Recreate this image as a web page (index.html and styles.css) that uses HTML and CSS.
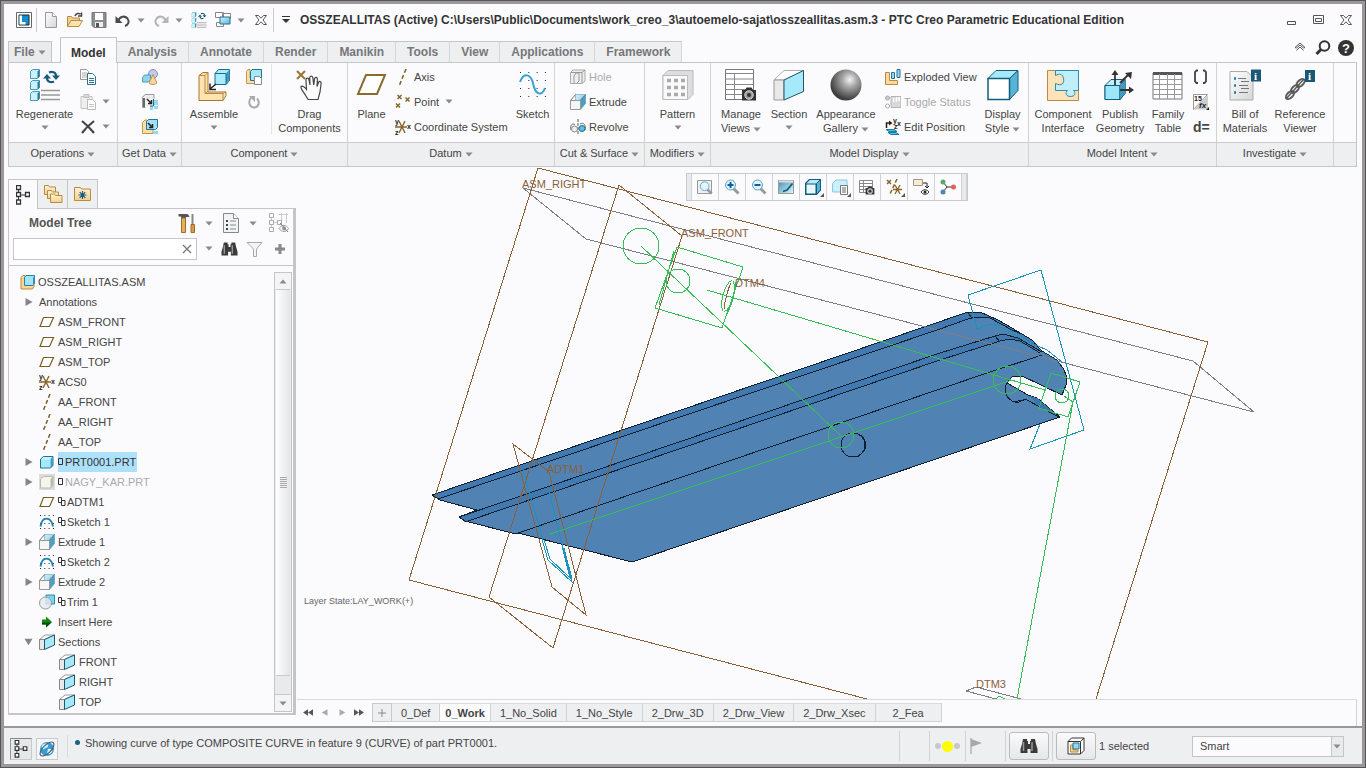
FILE: index.html
```html
<!DOCTYPE html>
<html lang="en">
<head>
<meta charset="utf-8">
<title>OSSZEALLITAS (Active) - PTC Creo Parametric Educational Edition</title>
<link rel="stylesheet" href="styles.css">
</head>
<body>
<svg class="paints" aria-hidden="true">
  <defs>
    <linearGradient id="gBlue" x1="0" y1="0" x2="1" y2="1"><stop offset="0" stop-color="#d3f3fd"/><stop offset="1" stop-color="#5cb6da"/></linearGradient>
    <linearGradient id="gGray" x1="0" y1="0" x2="1" y2="1"><stop offset="0" stop-color="#fff"/><stop offset="1" stop-color="#d4d6d8"/></linearGradient>
    <linearGradient id="gWood" x1="0" y1="0" x2="0" y2="1"><stop offset="0" stop-color="#fff3d4"/><stop offset="1" stop-color="#f3d08f"/></linearGradient>
    <linearGradient id="gView" x1="0" y1="0" x2="1" y2="1"><stop offset="0" stop-color="#3f92b4"/><stop offset="1" stop-color="#e2f7fe"/></linearGradient>
    <radialGradient id="gBall" cx=".62" cy=".33" r=".65"><stop offset="0" stop-color="#f4f4f4"/><stop offset=".35" stop-color="#aaa"/><stop offset="1" stop-color="#3c3c3c"/></radialGradient>
  </defs>
</svg>
<svg class="sprite" aria-hidden="true">
  <symbol id="caret" viewBox="0 0 8 5"><path d="M.5.5h7L4 4.5z" fill="#8a8a8a"/></symbol>
  <symbol id="app" viewBox="0 0 16 16"><path d="M.5.5h15v15H.5z" fill="#fff" stroke="#666"/><path d="M3 3h10v10H3z" fill="#0d8fd0" stroke="#222"/><path d="M3.500 9V12.500H9.500V10H6V3.500H3.500z" fill="#fff"/></symbol>
  <symbol id="new" viewBox="0 0 16 16"><path d="M2.500.5h7l4 4v11h-11z" fill="url(#gGray)" stroke="#999"/><path d="M9.500.5v4h4" fill="#fff" stroke="#999"/></symbol>
  <symbol id="open" viewBox="0 0 16 16"><path d="M.5 14V4.500h4l1 1.500h7V9" fill="#f0cf92" stroke="#b98d45"/><path d="M.5 14.500 4 8.500h11.500L12 14.500z" fill="#fde3ae" stroke="#b98d45"/><path d="M8 4C9 1 12 1 13.500 2M14.500.5V4H11" fill="none" stroke="#444" stroke-width="1.500"/></symbol>
  <symbol id="save" viewBox="0 0 16 16"><path d="M1 .5h14v15H3l-2-2z" fill="#8b8d8f" stroke="#777"/><path d="M4 1h8v7H4z" fill="#fff"/><path d="M4 10h8v5H4z" fill="#eee"/><path d="M5 11h3v4H5z" fill="#555"/></symbol>
  <symbol id="undo" viewBox="0 0 16 16"><path d="M3 9C5 4 10 3.500 12.500 6.500 15 10 13 13 10 14" fill="none" stroke="#4a4a4a" stroke-width="2"/><path d="M.5 4v7h7z" fill="#4a4a4a"/></symbol>
  <symbol id="redo" viewBox="0 0 16 16"><path d="M13 9C11 4 6 3.500 3.500 6.500 1 10 3 13 6 14" fill="none" stroke="#b5b5b5" stroke-width="2"/><path d="M15.500 4v7h-7z" fill="#b5b5b5"/></symbol>
  <symbol id="minicube" viewBox="0 0 10 10"><path d="M.5 2.500 2.500.5h7v7l-2 2h-7z" fill="#bfeffc" stroke="#4d9ab8"/><path d="M7.500 2.500 9.500.5v7l-2 2z" fill="#2a7d9e"/><path d="M1 3h6v6H1z" fill="#c9f2fd"/></symbol>
  <symbol id="sync" viewBox="0 0 17 14"><path d="M6 2.500c3-1.500 7-.5 7 3.500M11 11.500c-3 1.500-7 .5-7-3.500" fill="none" stroke="#155c7c" stroke-width="2.200"/><path d="M9 5.500h8l-4 4.500zM0 8.500h8L4 4z" fill="#155c7c"/></symbol>
  <symbol id="regen" viewBox="0 0 32 32"><use href="#minicube" x="1" y="0" width="10" height="10"/><use href="#minicube" x="1" y="11" width="10" height="10"/><use href="#minicube" x="1" y="22" width="10" height="10"/><use href="#sync" x="14" y="1" width="17" height="14"/><path d="M12 21.500h19M12 26h19M12 30.500h19" stroke="#999" stroke-width="1.600"/></symbol>
  <symbol id="windows" viewBox="0 0 16 16"><path d="M.5.5h8v5h-8zM7.500 1.500h8v5h-8zM1.500 10.500h7v4h-7z" fill="#fff" stroke="#888"/><path d="M5 5h10v7H5z" fill="url(#gBlue)" stroke="#2a6d8a"/></symbol>
  <symbol id="xout" viewBox="0 0 12 12"><path d="M.5 1.500h3L6 4.200l2.500-2.700h3L8 6l3.500 4.500h-3L6 7.800 3.500 10.500h-3L4 6z" fill="#fff" stroke="#555"/></symbol>
  <symbol id="customize" viewBox="0 0 8 8"><path d="M0 .5h8" stroke="#333"/><path d="M0 3h8L4 7z" fill="#333"/></symbol>
  <symbol id="search" viewBox="0 0 16 16"><circle cx="9.500" cy="6" r="4.800" fill="none" stroke="#333" stroke-width="2"/><path d="M6 9.500 1.500 14" stroke="#333" stroke-width="3"/></symbol>
  <symbol id="copy" viewBox="0 0 16 16"><path d="M.5.5h6l2 2v8h-8z" fill="#fff" stroke="#999"/><path d="M2 4h5M2 6h5M2 8h5" stroke="#aaa"/><path d="M7.500 4.500h5l3 3v8h-8z" fill="#fff" stroke="#2b7190"/><path d="M9 9.500h5M9 11.500h5M9 13.500h5" stroke="#2b7190"/></symbol>
  <symbol id="paste" viewBox="0 0 16 16"><path d="M1 2.500h11v12H1z" fill="#eee" stroke="#c4c4c4"/><path d="M4 .5h5v3H4z" fill="#ddd" stroke="#bbb"/><path d="M7.500 5.500h5l3 3v7h-8z" fill="#fff" stroke="#bbb"/><path d="M9 10.500h5M9 12.500h5" stroke="#c4c4c4"/></symbol>
  <symbol id="delete" viewBox="0 0 16 16"><path d="M2 2C7 6 10 9 14 14M14 2C9 6 5 10 2 14" fill="none" stroke="#444" stroke-width="2.200"/></symbol>
  <symbol id="shapes" viewBox="0 0 16 16"><circle cx="11" cy="5" r="4.500" fill="#c3cbea" stroke="#8390c0"/><path d="M.5 8.500 2.500 6h6v5l-2 2h-6z" fill="#8ed4ec" stroke="#4d9ab8"/><path d="M11 5.500 15 14c-2 2-6 2-8 0z" fill="#f7d59e" stroke="#c4954d"/></symbol>
  <symbol id="copygeo" viewBox="0 0 16 16"><path d="M.5 3.500 3 .5h9v4M.5 3.500v10h3" fill="#eee" stroke="#999"/><path d="M1 4h2v9H1z" fill="#666"/><path d="M4 4h7v7H4z" fill="#fff" stroke="#ddd"/><path d="M5 5l4 4M9.500 6v3.500H6" stroke="#222" stroke-width="1.500" fill="none"/><path d="M12 6h4v5h-4zM8 12h3v4H8zM12 12h4v3h-4z" fill="#8fdcf2"/><path d="M11.500 5v7H8" stroke="#2b7190" fill="none"/></symbol>
  <symbol id="shrink" viewBox="0 0 16 16"><path d="M.5 3.500 3 1h2v9h6v4.500H.5z" fill="#fbdfa8" stroke="#c4954d"/><path d="M4.500 2.500 6.500.5h9v8l-2 2h-9z" fill="#a2e0f5" stroke="#2b7190"/><path d="M6 4l4 4M10.500 5v3.500H7" stroke="#222" stroke-width="1.500" fill="none"/><path d="M11 12h5v3h-5z" fill="#8fdcf2"/></symbol>
  <symbol id="assemble" viewBox="0 0 32 32"><path d="M1 6.500 5 3.500h5V23h18v3.500L25 31.500H1z" fill="#ffe3b0" stroke="#a8782e"/><path d="M1 6.500h6v18h18v7M7 6.500l3-3M7 24.500l3-2M25 24.500l3-2" fill="none" stroke="#b98a42"/><path d="M17 4.500 20.500.5h11v11l-3.500 4H17z" fill="#a9ecfc" stroke="#1d6d8c"/><path d="M28 4.500 31.500.5v11l-3.500 4z" fill="#3f9cc0"/><path d="M17 4.500h11v11" fill="none" stroke="#1d6d8c"/><path d="M18 15l-6 5M12 14.500V20.500h6" fill="none" stroke="#222" stroke-width="1.500"/></symbol>
  <symbol id="create" viewBox="0 0 16 16"><path d="M.5 2.500 2 .5h2V9h8v5.500H.5z" fill="#fbdfa8" stroke="#c4954d"/><path d="M4.500 2.500 6 .5h9.500v9L14 11.500H4.500z" fill="#a2e8fa" stroke="#2b7190"/><path d="M8.500 7.500h5l2 2v6h-7z" fill="#fff" stroke="#888"/></symbol>
  <symbol id="repeat" viewBox="0 0 16 16"><path d="M5 4C2 7 3 13 8 13.500c5 0 6-6 3-9" fill="none" stroke="#aaa" stroke-width="2"/><path d="M3 2h6v6z" fill="#aaa"/></symbol>
  <symbol id="hand" viewBox="0 0 32 32"><path d="M3 2l8 8M11 2l-8 8" stroke="#9a7434" stroke-width="2"/><path d="M12 27C9 22 6 19 7 17.500c1.500-1.500 4 1 5.500 3L12 11c0-2.500 2.800-2.500 3 0l1 5-.3-7c0-2.600 3-2.600 3.200 0l.8 7 .8-6c.3-2.300 3-2 2.900.5l-.4 7 1.500-4c.8-1.800 3-1 2.600 1L26 23l-2 7.500H14z" fill="#fff" stroke="#444" stroke-width="1.200"/></symbol>
  <symbol id="plane" viewBox="0 0 32 32"><path d="M10 6h19l-8 19H2z" fill="#fff" stroke="#8c6a2e" stroke-width="2"/></symbol>
  <symbol id="planes" viewBox="0 0 16 16"><path d="M4.500 3.500h10l-4 9H1z" fill="#fff" stroke="#7a5c22" stroke-width="1.200"/></symbol>
  <symbol id="axis" viewBox="0 0 16 16"><path d="M11 0 4.500 16" stroke="#7a5c22" stroke-width="1.500" stroke-dasharray="4 2.500"/></symbol>
  <symbol id="point" viewBox="0 0 16 16"><path d="M2.500 1l4 4m0-4-4 4M10.500 3.500l4 4m0-4-4 4M1 9.500l4 4m0-4-4 4" stroke="#86652a" stroke-width="1.500"/></symbol>
  <symbol id="csys" viewBox="0 0 16 16"><path d="M0 8h12M4 2l6 12M10 2 4 14" stroke="#86652a" stroke-width="1.400"/><text x="0" y="5" class="tiny">y</text><text x="12" y="10" class="tiny">x</text><text x="0" y="16" class="tiny">z</text></symbol>
  <symbol id="sketch" viewBox="0 0 32 32"><path d="M3 3.500h26M3 11.500h26M3 19.500h26M3 27.500h26" stroke="#222" stroke-dasharray="1 7.300"/><path d="M3 13C7 2 14 6 16 14c2 12 9 14 12 5" fill="none" stroke="#36a4d2" stroke-width="2"/></symbol>
  <symbol id="sketchs" viewBox="0 0 16 16"><path d="M1 1.500h14M1 9.500h14M1 14.500h14" stroke="#222" stroke-dasharray="1 3.300"/><path d="M1.500 12.500C3 2 12 2 14 12.500" fill="none" stroke="#1b7fb0" stroke-width="1.800"/></symbol>
  <symbol id="hole" viewBox="0 0 16 16"><path d="M.5 3.500 3 1h12v11l-3 2.500H.5z" fill="#eee" stroke="#aaa"/><path d="M12 3.500V14M4 14V7l2-3h3v8l-2 2M12 3.500 15 1M1 3.500h11" fill="none" stroke="#999"/></symbol>
  <symbol id="extrude" viewBox="0 0 16 16"><path d="M5.500.5h10v9l-5 6H5.500z" fill="url(#gBlue)" stroke="#7fb4c8" stroke-width=".8"/><path d="M15.500.5v9l-5 6V5.500z" fill="#4d9fc2"/><path d="M.5 6.500h10v9H.5z" fill="#f6f6f6" stroke="#999"/><path d="M.5 6.500l5-6M10.500 6.500l5-6" stroke="#777"/></symbol>
  <symbol id="revolve" viewBox="0 0 16 16"><path d="M1 11C0 6 2 4 5 5.500M10 5c4-2 6 1 5 6" fill="none" stroke="#666"/><path d="M8 0v16" stroke="#555" stroke-dasharray="3 1"/><circle cx="4.500" cy="10" r="3" fill="#eee" stroke="#888"/><circle cx="12" cy="9.500" r="3" fill="#5fbfe0" stroke="#1d6d8c"/></symbol>
  <symbol id="pattern" viewBox="0 0 32 32"><path d="M1 6.500 6 1.500h25v24l-5 5H1z" fill="#ddd" stroke="#bbb"/><path d="M1 6.500h24.500v24H1z" fill="#fafafa" stroke="#bbb"/><path d="M5 11.500h18M5 18.500h18M5 25.500h18" stroke="#aaa" stroke-width="3.500" stroke-dasharray="4 3"/></symbol>
  <symbol id="camera" viewBox="0 0 16 14"><path d="M1 3h3l1.500-2.500h5L12 3h3v10.500H1z" fill="#333"/><circle cx="8" cy="8" r="4.200" fill="#999" stroke="#ddd"/><circle cx="8" cy="8" r="2" fill="#333"/></symbol>
  <symbol id="views" viewBox="0 0 32 32"><path d="M.5.5h28v30H.5z" fill="#fff" stroke="#777"/><path d="M.5 4.500h28M.5 10h28M.5 15.500h28M.5 20.500h28M.5 25.500h28M9.500 4v26" stroke="#888"/><use href="#camera" x="16" y="18" width="16" height="14"/></symbol>
  <symbol id="viewss" viewBox="0 0 16 16"><path d="M.5 1.500h13v12H.5z" fill="#fff" stroke="#888"/><path d="M.5 4.500h13M.5 7.500h13M.5 10.500h13M4.500 2v11" stroke="#888"/><use href="#camera" x="6" y="7" width="10" height="9"/></symbol>
  <symbol id="section" viewBox="0 0 32 32"><path d="M1 11 11 1.500h20L11 11z" fill="#fff" stroke="#aaa"/><path d="M1 11h10v20H1z" fill="#e9e9e9" stroke="#999"/><path d="M11 11 30.500 1.500v21L11 31z" fill="#a6e9fb" stroke="#22566c"/></symbol>
  <symbol id="ball" viewBox="0 0 32 32"><circle cx="16" cy="16" r="15.500" fill="url(#gBall)"/></symbol>
  <symbol id="explode" viewBox="0 0 16 16"><path d="M.5 3.500h4v8h8v4H.5z" fill="#fbd9a0" stroke="#b98a42"/><path d="M6.500 3.500h3v6h-3zM12 .5h3v8h-3z" fill="#8fdcf2" stroke="#2b7190"/></symbol>
  <symbol id="toggle" viewBox="0 0 16 16"><circle cx="2.500" cy="4" r="2" fill="#ccc" stroke="#aaa"/><circle cx="2.500" cy="12" r="2" fill="#fff" stroke="#aaa"/><path d="M6 2.500h10v11H6z" fill="#d8d8d8" stroke="#b5b5b5"/><path d="M8.500 4v4M11.500 3v5M14 3v4" stroke="#fff" stroke-width="1.500"/></symbol>
  <symbol id="editpos" viewBox="0 0 16 16"><path d="M1.500 9V4h3" fill="none" stroke="#222" stroke-width="1.500"/><path d="M4 1.500 7.500 4 4 6.500z" fill="#222"/><text x="8" y="4" class="tiny">y</text><text x="12" y="7" class="tiny">x</text><text x="9" y="10" class="tiny">z</text><path d="M1 10.500h8l3 2H4zM3 13.500h8l3 2H6z" fill="#54bfe5" stroke="#1d7fa8"/></symbol>
  <symbol id="cube" viewBox="0 0 32 32"><path d="M1 9.500 9 1.500h22l-8.500 8z" fill="#a6e9fb" stroke="#155c7c"/><path d="M22.500 9.500 31 1.500v20l-8.500 9z" fill="#56b4d6" stroke="#155c7c"/><path d="M1 9.500h21.500v21H1z" fill="#fff" stroke="#155c7c" stroke-width="1.500"/></symbol>
  <symbol id="cubes" viewBox="0 0 16 16"><path d="M.5 4.500 4.500.5h11v10.500l-4 4.500H.5z" fill="#b5ecfb" stroke="#155c7c" stroke-width="1.200"/><path d="M11.500 4.500l4-4V11l-4 4.500z" fill="#56b4d6" stroke="#155c7c"/><path d="M1 5h10v10H1z" fill="#e6f8fd" stroke="#155c7c"/></symbol>
  <symbol id="puzzle" viewBox="0 0 32 32"><path d="M.5 1.500h31v30H.5z" fill="#ffe3b8" stroke="#b98a42"/><path d="M8.500 1.500h23v20h-5c3 3 1 6-3 6s-6-3-3-6h-12v-7c6 3 9 0 8-5s-4-5-8-3z" fill="#c0effb" stroke="#2b8cae"/></symbol>
  <symbol id="publish" viewBox="0 0 32 32"><path d="M1 16.500 7 10.500h14v14l-5 6H1z" fill="#bdf0fd" stroke="#155c7c"/><path d="M1 16.500h15v14H1zM16 16.500l5-6v14l-5 6z" fill="#9be6fb" stroke="#155c7c"/><path d="M16 17l5-6v13l-5 6z" fill="#3f9cc0"/><path d="M11 16V3M16 14l9-9M16 21h12" stroke="#333" stroke-width="1.800"/><path d="M7.500 6 11 1l3.500 5zM21 4l7-1-1 7zM25 17.500l5 3.500-5 3.500z" fill="#333"/></symbol>
  <symbol id="family" viewBox="0 0 32 32"><path d="M1 4h29v26H1z" fill="#fff" stroke="#777"/><path d="M1 4.500h29" stroke="#555" stroke-width="3"/><path d="M1 10.500h29M1 15.500h29M1 20.500h29M1 25.500h29M7.500 5v25M15.500 5v25M22.500 5v25" stroke="#999"/></symbol>
  <symbol id="paren" viewBox="0 0 16 16"><path d="M5 1.500H3.500L2 3v9.500L3.500 14H5M10 1.500h1.500L13 3v9.500L11.500 14H10" fill="none" stroke="#444" stroke-width="1.800"/></symbol>
  <symbol id="switchdim" viewBox="0 0 16 16"><path d="M.5.5h14L.5 15.500z" fill="#fff" stroke="#999"/><path d="M15 1v14.500H1z" fill="#ccc"/><text x="1" y="7" class="tiny">15</text><text x="6" y="14" class="fx">fx</text><path d="M16 13v3h-3z" fill="#222"/></symbol>
  <symbol id="info" viewBox="0 0 10 12"><path d="M0 0h10v12H0z" fill="#1a5876"/><text x="3" y="10" class="infot">i</text></symbol>
  <symbol id="bom" viewBox="0 0 32 32"><path d="M1 2.500h17l6 6v22.500H1z" fill="url(#gGray)" stroke="#aaa"/><path d="M5 9.500h2M5 16.500h2M5 23.500h2" stroke="#1b7fb0" stroke-width="2.500"/><path d="M9 9.500h8M12 12.500h8M10 16.500h9M12 19.500h8M10 23.500h9" stroke="#777"/><use href="#info" x="22" y="0" width="10" height="13"/></symbol>
  <symbol id="chain" viewBox="0 0 32 32"><g fill="none" stroke="#5b5b5b" stroke-width="2"><ellipse cx="6" cy="26" rx="2.800" ry="5" transform="rotate(45 6 26)"/><ellipse cx="11" cy="20" rx="2.800" ry="5" transform="rotate(45 11 20)"/><ellipse cx="16.500" cy="14" rx="2.800" ry="5" transform="rotate(45 16.500 14)"/><path d="M2 30 19 11" stroke-width="1.500"/></g><use href="#info" x="21" y="0" width="10" height="14"/></symbol>
  <symbol id="treeic" viewBox="0 0 14 20"><path d="M2.500 4.500v11M4 10h6" stroke="#333"/><path d="M.5.500h4v4h-4zM.5 7.500h4v4h-4zM.5 15h4v4h-4zM9.500 7.500h4v4h-4z" fill="#fff" stroke="#333" stroke-width="1.300"/></symbol>
  <symbol id="folders" viewBox="0 0 20 20"><g fill="url(#gWood)" stroke="#b98a42"><path d="M1.500 10.500v-9h4l1 1.500h6v7.500z"/><path d="M4.500 14.500v-8h4l1 1.500h6v6.500z"/><path d="M7.500 18.500V10h4l1 1.500h6.500v7z"/></g></symbol>
  <symbol id="favs" viewBox="0 0 20 20"><path d="M1.500 16.500v-13h6l1 1.500h9v11.500z" fill="url(#gWood)" stroke="#b98a42"/><path d="M9.500 7v8M5.500 11h8M6.700 8.200l5.600 5.600M12.300 8.200l-5.600 5.600" stroke="#155c7c" stroke-width="1.200"/></symbol>
  <symbol id="tools" viewBox="0 0 18 20"><path d="M.5 1h8c2 0 2.500 1.500 3 3H8V5H3V3.500H.5z" fill="#555"/><path d="M3.500 5h4v14.500h-4z" fill="#e2b15e" stroke="#9a6e26"/><path d="M14.500 1v11" stroke="#888" stroke-width="2"/><path d="M13 11.500h3.500v8H13z" fill="#d89c44" stroke="#9a6e26"/></symbol>
  <symbol id="listdoc" viewBox="0 0 16 20"><path d="M.5.5h10l5 5v14H.5z" fill="#f0f4f6" stroke="#888"/><path d="M10.500.5v5h5" fill="#fff" stroke="#888"/><path d="M3 8h2M3 12h2M3 16h2" stroke="#444" stroke-width="2"/><path d="M7 8h6M7 12h6M7 16h6" stroke="#888"/></symbol>
  <symbol id="hidetree" viewBox="0 0 20 20"><path d="M2.500 4v12M4 9.500h4M12.500 0v10M17.500 0v10M9 1.500h10" stroke="#ccc"/><path d="M.5.5h4v4h-4zM.5 7.500h4v4h-4zM.5 14.500h4v4h-4zM8.500 7.500h4v4h-4z" fill="#fff" stroke="#aaa"/><path d="M10 15.500c3-4 7-4 9.500 0-3 4-6.500 4-9.500 0z" fill="#fff" stroke="#999"/><circle cx="15" cy="15.500" r="2" fill="#999"/><path d="M11 10l8 9" stroke="#777"/></symbol>
  <symbol id="binoc" viewBox="0 0 18 16"><path d="M3 1h4v2h1v3h2V3h1V1h4l1 5 1.500 5v4H10.500v-4h-3v4H.5v-4L2 6z" fill="#3a3a3a"/><path d="M3.500 4v9M12 4v9" stroke="#999" stroke-width="1.500"/></symbol>
  <symbol id="funnel" viewBox="0 0 16 16"><path d="M.5 1.500h15L10 8v7.500H7V8z" fill="#f4f4f4" stroke="#aaa"/></symbol>
  <symbol id="plus" viewBox="0 0 12 12"><path d="M6 1v10M1 6h10" stroke="#888" stroke-width="3"/></symbol>
  <symbol id="clear" viewBox="0 0 10 10"><path d="M1 1l8 8M9 1 1 9" stroke="#777" stroke-width="1.300"/></symbol>
  <symbol id="asm" viewBox="0 0 16 16"><path d="M1 3.500 3 1.500h2v9h9v2l-1.500 2.500H1z" fill="#fbd595" stroke="#b98a42"/><path d="M4.500 3.500 6 1.500h8.500v8L13 11.500H4.500z" fill="#9fe6fb" stroke="#2b7fa0"/><path d="M13 4v7l1.500-1.500v-8z" fill="#3f8fb4"/></symbol>
  <symbol id="part" viewBox="0 0 16 16"><path d="M1.500 5 4.500 2.500h9.500v9L11.500 14h-10z" fill="#c6f3fe" stroke="#1d7192"/><path d="M11.500 5 14 2.500v9L11.500 14z" fill="#3ba0c7"/><path d="M2 5.500h9V13H2z" fill="#a5eafc"/></symbol>
  <symbol id="partoff" viewBox="0 0 16 16"><path d="M0 0h16v16H0z" fill="#dcdcda"/><path d="M1.500 5 4.500 2.500h9.500v9L11.500 14h-10z" fill="#f5f5ee" stroke="#b9b9ae"/><path d="M11.500 5 14 2.500v9L11.500 14z" fill="#bbbbae"/></symbol>
  <symbol id="trim" viewBox="0 0 16 16"><path d="M7 1h8.500v9H7z" fill="#7fd3f2" stroke="#2b8cae"/><circle cx="6.500" cy="9" r="6" fill="#e6eaeb" fill-opacity=".8" stroke="#999"/></symbol>
  <symbol id="insert" viewBox="0 0 16 16"><path d="M3 5.500h4V2.500l6 5.500-6 5.500v-3H3z" fill="#108a10"/><path d="M3 10.500V8.500h9.500l-5.500 5v-3z" fill="#0a4a0a"/></symbol>
  <symbol id="sec" viewBox="0 0 16 16"><path d="M.5 5.500 6 1h9.500l-10 4.500z" fill="#fff" stroke="#999"/><path d="M.5 5.500h5v10h-5z" fill="#e9e9e9" stroke="#888"/><path d="M5.500 5.500l10-4.500v10l-10 4.500z" fill="#a6e9fb" stroke="#22566c"/></symbol>
  <symbol id="right" viewBox="0 0 8 10"><path d="M1 1l7 4-7 4z" fill="#858585"/></symbol>
  <symbol id="down" viewBox="0 0 10 8"><path d="M.5.500h9L5 7.500z" fill="#858585"/></symbol>
  <symbol id="one" viewBox="0 0 6 10"><path d="M.5 1.500h4v6h-4z" fill="none" stroke="#333"/></symbol>
  <symbol id="two" viewBox="0 0 8 10"><path d="M.5.500h3v5h-3zM3.500 3.500h3.500v5H3.500z" fill="#fff" stroke="#333"/></symbol>
  <symbol id="lens" viewBox="0 0 16 16"><path d="M9.500 9.500l5 5" stroke="#999" stroke-width="3"/><circle cx="6.500" cy="6" r="5" fill="#e2f4fb" stroke="#5aa3c2"/></symbol>
  <symbol id="refit" viewBox="0 0 16 16"><path d="M.5 1.500h14v13H.5z" fill="#f0f0f0" stroke="#999"/><use href="#lens" x="2" y="2" width="14" height="14"/></symbol>
  <symbol id="zoomin" viewBox="0 0 16 16"><use href="#lens" width="16" height="16"/><path d="M6.500 3v6M3.500 6h6" stroke="#155c9c" stroke-width="2"/></symbol>
  <symbol id="zoomout" viewBox="0 0 16 16"><use href="#lens" width="16" height="16"/><path d="M3.500 6h6" stroke="#155c9c" stroke-width="2"/></symbol>
  <symbol id="repaint" viewBox="0 0 16 16"><path d="M.5 1.500h15v13H.5z" fill="url(#gView)" stroke="#999"/><path d="M1 2.500h14" stroke="#ddd" stroke-width="2"/><path d="M14.500 4.500 9 11l-4 1.500" fill="none" stroke="#155c7c" stroke-width="1.800"/></symbol>
  <symbol id="saved" viewBox="0 0 16 16"><path d="M.5 4.500 4 1h11v8l-3 4H.5z" fill="#c8f1fc" stroke="#8fc7da"/><path d="M8.500 6.500h7v9h-7z" fill="#fff" stroke="#777"/><path d="M10 9h4M10 11h4M10 13h4" stroke="#666"/></symbol>
  <symbol id="datumf" viewBox="0 0 16 16"><path d="M1 1l4 4m0-4L1 5" stroke="#86652a" stroke-width="1.500"/><path d="M11 0 4 15" stroke="#86652a" stroke-width="1.500" stroke-dasharray="4 2"/><path d="M7 10.500h9M9 6l5 9M14 6l-5 9" stroke="#86652a" stroke-width="1.300"/></symbol>
  <symbol id="annof" viewBox="0 0 16 16"><path d="M.5.500h9v6h-9z" fill="#fdebc8" stroke="#999"/><path d="M10 4h4v5M12 7l2 2 2-2" stroke="#222" fill="none"/><path d="M8 13c2-3 6-3 8 0-2 3-6 3-8 0z" fill="#fff" stroke="#333"/><circle cx="12" cy="13" r="1.500" fill="#222"/></symbol>
  <symbol id="spin" viewBox="0 0 16 16"><path d="M3 3l4 5-4 5M7 8h6" fill="none" stroke="#333"/><circle cx="3" cy="3" r="2.500" fill="#59a86a"/><circle cx="3" cy="13" r="2.500" fill="#4a86b8"/><circle cx="13.500" cy="8" r="2.500" fill="#e0605c"/></symbol>
  <symbol id="globe" viewBox="0 0 18 18"><circle cx="9" cy="9" r="7" fill="#3a9bd2"/><path d="M4 5c2-2 5-2 6 0s-2 3-4 4-3-2-2-4zM10 9c3-1 5 1 4 3s-4 3-5 1z" fill="#d5effa"/><ellipse cx="9" cy="9" rx="9" ry="4" transform="rotate(-45 9 9)" fill="none" stroke="#4c6270" stroke-width="1.200"/></symbol>
  <symbol id="flag" viewBox="0 0 14 18"><path d="M2 1v16" stroke="#b5b5b5" stroke-width="1.500"/><path d="M2 2l11 4-11 4z" fill="#a8a8a8"/></symbol>
  <symbol id="geofilt" viewBox="0 0 18 18"><path d="M1 4.500 4.500 1H17v12.500L13.500 17H1zM1 4.500h12.500V17M13.500 4.500 17 1" fill="#fff" stroke="#333"/><path d="M3.500 8h2.500v5h5v2h-7.500z" fill="#fbd595" stroke="#b98a42"/><path d="M6 6h6v6H6z" fill="#8fdcf2" stroke="#2b7190"/></symbol>
</svg>

<div class="window">
  <header class="titlebar">
    <button class="ic"><svg><use href="#app"/></svg></button>
    <span class="vsep"></span>
    <button class="ic"><svg><use href="#new"/></svg></button>
    <button class="ic"><svg><use href="#open"/></svg></button>
    <button class="ic"><svg><use href="#save"/></svg></button>
    <button class="ic"><svg><use href="#undo"/></svg></button>
    <button class="drop"><svg class="caret"><use href="#caret"/></svg></button>
    <button class="ic"><svg><use href="#redo"/></svg></button>
    <button class="drop"><svg class="caret"><use href="#caret"/></svg></button>
    <button class="ic"><svg><use href="#regen"/></svg></button>
    <button class="ic"><svg><use href="#windows"/></svg></button>
    <button class="drop"><svg class="caret"><use href="#caret"/></svg></button>
    <button class="ic pad"><svg><use href="#xout"/></svg></button>
    <span class="vsep"></span>
    <button class="cust"><svg><use href="#customize"/></svg></button>
    <h1>OSSZEALLITAS (Active) C:\Users\Public\Documents\work_creo_3\autoemelo-sajat\osszeallitas.asm.3 - PTC Creo Parametric Educational Edition</h1>
    <div class="winbtns">
      <button class="ic"><svg viewBox="0 0 16 16"><path d="M3.500 9.500h8v3h-8z" fill="#fff" stroke="#555"/></svg></button>
      <button class="ic"><svg viewBox="0 0 16 16"><path d="M2.500 3.500h10v8h-10zM4.500 6.500h6v3h-6z" fill="#fff" stroke="#555"/></svg></button>
      <button class="ic pad"><svg><use href="#xout"/></svg></button>
    </div>
  </header>

  <nav class="tabs">
    <button class="file">File <svg class="caret"><use href="#caret"/></svg></button>
    <button class="tab active">Model</button>
    <button class="tab">Analysis</button>
    <button class="tab">Annotate</button>
    <button class="tab">Render</button>
    <button class="tab">Manikin</button>
    <button class="tab">Tools</button>
    <button class="tab">View</button>
    <button class="tab">Applications</button>
    <button class="tab">Framework</button>
    <div class="help">
      <button class="ic"><svg viewBox="0 0 16 16"><path d="M3 7.500 8 3l5 4.500-1.500.5L8 5 4.500 8zM4.500 10.500 8 7l3.500 3.500" fill="#fff" stroke="#555"/></svg></button>
      <button class="ic"><svg><use href="#search"/></svg></button>
      <button class="ic"><svg viewBox="0 0 16 16"><circle cx="8" cy="8" r="8" fill="#333"/><text x="4" y="13" class="qm">?</text></svg></button>
    </div>
  </nav>

  <section class="ribbon">
    <div class="group g-ops">
      <div class="body">
        <button class="big"><svg class="i32"><use href="#regen"/></svg><span>Regenerate</span><svg class="caret"><use href="#caret"/></svg></button>
        <div class="col">
          <button class="sm"><svg class="i16"><use href="#copy"/></svg></button>
          <button class="sm"><svg class="i16"><use href="#paste"/></svg><svg class="caret"><use href="#caret"/></svg></button>
          <button class="sm"><svg class="i16"><use href="#delete"/></svg><svg class="caret"><use href="#caret"/></svg></button>
        </div>
      </div>
      <button class="foot">Operations <svg class="caret"><use href="#caret"/></svg></button>
    </div>
    <div class="group g-data">
      <div class="body">
        <div class="col mid">
          <button class="sm"><svg class="i16"><use href="#shapes"/></svg></button>
          <button class="sm"><svg class="i16"><use href="#copygeo"/></svg></button>
          <button class="sm"><svg class="i16"><use href="#shrink"/></svg></button>
        </div>
      </div>
      <button class="foot">Get Data <svg class="caret"><use href="#caret"/></svg></button>
    </div>
    <div class="group g-comp">
      <div class="body">
        <button class="big"><svg class="i32"><use href="#assemble"/></svg><span>Assemble</span><svg class="caret"><use href="#caret"/></svg></button>
        <div class="col ruled">
          <button class="sm"><svg class="i16"><use href="#create"/></svg></button>
          <button class="sm"><svg class="i16"><use href="#repeat"/></svg></button>
        </div>
        <button class="big"><svg class="i32"><use href="#hand"/></svg><span>Drag</span><span>Components</span></button>
      </div>
      <button class="foot">Component <svg class="caret"><use href="#caret"/></svg></button>
    </div>
    <div class="group g-datum">
      <div class="body">
        <button class="big"><svg class="i32"><use href="#plane"/></svg><span>Plane</span></button>
        <div class="col">
          <button class="sm"><svg class="i16"><use href="#axis"/></svg>Axis</button>
          <button class="sm"><svg class="i16"><use href="#point"/></svg>Point <svg class="caret"><use href="#caret"/></svg></button>
          <button class="sm"><svg class="i16"><use href="#csys"/></svg>Coordinate System</button>
        </div>
        <button class="big"><svg class="i32"><use href="#sketch"/></svg><span>Sketch</span></button>
      </div>
      <button class="foot">Datum <svg class="caret"><use href="#caret"/></svg></button>
    </div>
    <div class="group g-cut">
      <div class="body">
        <div class="col">
          <button class="sm off"><svg class="i16"><use href="#hole"/></svg>Hole</button>
          <button class="sm"><svg class="i16"><use href="#extrude"/></svg>Extrude</button>
          <button class="sm"><svg class="i16"><use href="#revolve"/></svg>Revolve</button>
        </div>
      </div>
      <button class="foot">Cut &amp; Surface <svg class="caret"><use href="#caret"/></svg></button>
    </div>
    <div class="group g-mod">
      <div class="body">
        <button class="big"><svg class="i32"><use href="#pattern"/></svg><span>Pattern</span><svg class="caret"><use href="#caret"/></svg></button>
      </div>
      <button class="foot">Modifiers <svg class="caret"><use href="#caret"/></svg></button>
    </div>
    <div class="group g-disp">
      <div class="body">
        <button class="big"><svg class="i32"><use href="#views"/></svg><span>Manage</span><span>Views <svg class="caret"><use href="#caret"/></svg></span></button>
        <button class="big"><svg class="i32"><use href="#section"/></svg><span>Section</span><svg class="caret"><use href="#caret"/></svg></button>
        <button class="big"><svg class="i32"><use href="#ball"/></svg><span>Appearance</span><span>Gallery <svg class="caret"><use href="#caret"/></svg></span></button>
        <div class="col">
          <button class="sm"><svg class="i16"><use href="#explode"/></svg>Exploded View</button>
          <button class="sm off"><svg class="i16"><use href="#toggle"/></svg>Toggle Status</button>
          <button class="sm"><svg class="i16"><use href="#editpos"/></svg>Edit Position</button>
        </div>
        <button class="big"><svg class="i32"><use href="#cube"/></svg><span>Display</span><span>Style <svg class="caret"><use href="#caret"/></svg></span></button>
      </div>
      <button class="foot">Model Display <svg class="caret"><use href="#caret"/></svg></button>
    </div>
    <div class="group g-intent">
      <div class="body">
        <button class="big"><svg class="i32"><use href="#puzzle"/></svg><span>Component</span><span>Interface</span></button>
        <button class="big"><svg class="i32"><use href="#publish"/></svg><span>Publish</span><span>Geometry</span></button>
        <button class="big"><svg class="i32"><use href="#family"/></svg><span>Family</span><span>Table</span></button>
        <div class="col">
          <button class="sm"><svg class="i16"><use href="#paren"/></svg></button>
          <button class="sm"><svg class="i16"><use href="#switchdim"/></svg></button>
          <button class="sm deq">d=</button>
        </div>
      </div>
      <button class="foot">Model Intent <svg class="caret"><use href="#caret"/></svg></button>
    </div>
    <div class="group g-inv">
      <div class="body">
        <button class="big"><svg class="i32"><use href="#bom"/></svg><span>Bill of</span><span>Materials</span></button>
        <button class="big"><svg class="i32"><use href="#chain"/></svg><span>Reference</span><span>Viewer</span></button>
      </div>
      <button class="foot">Investigate <svg class="caret"><use href="#caret"/></svg></button>
    </div>
    <div class="group g-rest"><div class="body"></div><div class="foot"></div></div>
  </section>

  <main class="work">
    <aside class="side">
      <div class="sidetabs">
        <button class="on"><svg class="tr"><use href="#treeic"/></svg></button>
        <button><svg><use href="#folders"/></svg></button>
        <button><svg><use href="#favs"/></svg></button>
      </div>
      <div class="panel">
        <div class="phead">
          <h2>Model Tree</h2>
          <button class="pi"><svg><use href="#tools"/></svg></button>
          <button class="drop"><svg class="caret"><use href="#caret"/></svg></button>
          <button class="pi"><svg><use href="#listdoc"/></svg></button>
          <button class="drop"><svg class="caret"><use href="#caret"/></svg></button>
          <button class="pi last"><svg><use href="#hidetree"/></svg></button>
        </div>
        <div class="pfind">
          <div class="box"><input type="text" aria-label="Search tree"><button><svg><use href="#clear"/></svg></button></div>
          <button class="drop"><svg class="caret"><use href="#caret"/></svg></button>
          <button class="bi"><svg><use href="#binoc"/></svg></button>
          <button class="bi"><svg><use href="#funnel"/></svg></button>
          <button class="bi plus"><svg><use href="#plus"/></svg></button>
        </div>
        <div class="treewrap">
          <ul class="tree">
            <li class="root"><svg class="i16"><use href="#asm"/></svg>OSSZEALLITAS.ASM</li>
            <li><button class="tw"><svg><use href="#right"/></svg></button>Annotations</li>
            <li><i class="tw"></i><svg class="i16"><use href="#planes"/></svg>ASM_FRONT</li>
            <li><i class="tw"></i><svg class="i16"><use href="#planes"/></svg>ASM_RIGHT</li>
            <li><i class="tw"></i><svg class="i16"><use href="#planes"/></svg>ASM_TOP</li>
            <li><i class="tw"></i><svg class="i16"><use href="#csys"/></svg>ACS0</li>
            <li><i class="tw"></i><svg class="i16"><use href="#axis"/></svg>AA_FRONT</li>
            <li><i class="tw"></i><svg class="i16"><use href="#axis"/></svg>AA_RIGHT</li>
            <li><i class="tw"></i><svg class="i16"><use href="#axis"/></svg>AA_TOP</li>
            <li class="sel"><button class="tw"><svg><use href="#right"/></svg></button><svg class="i16"><use href="#part"/></svg><span><svg class="m1"><use href="#one"/></svg>PRT0001.PRT</span></li>
            <li class="off"><button class="tw"><svg><use href="#right"/></svg></button><svg class="i16"><use href="#partoff"/></svg><span><svg class="m1"><use href="#one"/></svg>NAGY_KAR.PRT</span></li>
            <li><i class="tw"></i><svg class="i16"><use href="#planes"/></svg><span><svg class="m2"><use href="#two"/></svg>ADTM1</span></li>
            <li><i class="tw"></i><svg class="i16"><use href="#sketchs"/></svg><span><svg class="m2"><use href="#two"/></svg>Sketch 1</span></li>
            <li><button class="tw"><svg><use href="#right"/></svg></button><svg class="i16"><use href="#extrude"/></svg>Extrude 1</li>
            <li><i class="tw"></i><svg class="i16"><use href="#sketchs"/></svg><span><svg class="m2"><use href="#two"/></svg>Sketch 2</span></li>
            <li><button class="tw"><svg><use href="#right"/></svg></button><svg class="i16"><use href="#extrude"/></svg>Extrude 2</li>
            <li><i class="tw"></i><svg class="i16"><use href="#trim"/></svg><span><svg class="m2"><use href="#two"/></svg>Trim 1</span></li>
            <li><i class="tw"></i><svg class="i16"><use href="#insert"/></svg>Insert Here</li>
            <li><button class="tw"><svg><use href="#down"/></svg></button><svg class="i16"><use href="#sec"/></svg>Sections</li>
            <li class="deep"><svg class="i16"><use href="#sec"/></svg>FRONT</li>
            <li class="deep"><svg class="i16"><use href="#sec"/></svg>RIGHT</li>
            <li class="deep"><svg class="i16"><use href="#sec"/></svg>TOP</li>
          </ul>
          <div class="scroll">
            <button><svg class="caret up"><use href="#caret"/></svg></button>
            <div class="thumb"><i></i></div>
            <div class="track"></div>
            <button><svg class="caret"><use href="#caret"/></svg></button>
          </div>
        </div>
      </div>
    </aside>

    <section class="view">
      <div class="canvas">
        <svg class="scene" viewBox="297 167 1060 532">
          <path class="face" d="M432 495 968 312h12l18 8 14 8 20 12 10 11 15 9 6 8 4 9-1 8-4 10-40-19-10 1-5 6 21 12 9 3 23 19L632 562 518 533h-6L465 521l-6-4 18-7-37-10z"/>
          <path class="strip" d="M432 495 968 312h12l18 8 14 8 20 12 10 11-30-21-22-12-22 1L438 499zM459 517 940 353l55-17 8-2 15 4 24 14-32-13-10 2-60 19-475 162z"/>
          <g class="edge">
            <path d="M432 495 968 312h12l18 8 14 8 20 12 10 11 15 9 6 8 4 9-1 8-4 10-40-19-10 1-5 6 21 12 9 3 23 19L632 562 518 533h-6L465 521l-6-4 18-7-37-10z"/>
            <path d="M438 499 940 329l28-10 8-2 14 1 22 12 10 4M968 312l4 7M459 517 940 353l55-17 8-2 15 4 24 14M465 522 940 360l60-19 10-2 10 2 20 12M995 336l5 6M518 533 940 389l50-17 52-17"/>
            <path d="M1007 383a13 13 0 0 0 8 19h4l6-3 34 18M1012 402l12-2"/>
            <circle cx="853" cy="445" r="12"/><path d="M861 435c8 8 6 16-4 22"/>
          </g>
          <path class="darkface" d="m1030 396 7 2 20 17-18-8z"/>
          <g class="gray">
            <path d="M523 188 1193 361 1254 412 586 239zM966 691l10-4 45 12M966 691l30 8"/>
          </g>
          <g class="brown">
            <path d="M867 699 409 580 538 168 1208 342 1096 699M619 185 489 597 553 648 682 236zM513 444 549 472 586 615 552 587z"/>
            <path d="M731 283c-4 8-6 18-7 26"/>
          </g>
          <g class="cyan">
            <path d="M977 329 968 295 1041 270 1084 430 1030 449 1040 424M977 329l6-3 10-2 10 4 24 13 20 9 15 12M542 539l6 21 24 22-10-38M544 540l6 19 20 19-8-32M564 548l8 31M543 540 523 470M548 487 562 544"/>
          </g>
          <g class="green">
            <circle cx="641" cy="246" r="18"/><circle cx="678" cy="281" r="12"/>
            <path d="M641 246 758 357 841 436M677 247 743 267 722 328 655 308zM674 251l-15 54M707 290 940 359 1045 390M550 534 841 437 1012 380M1051 373 1080 382 1068 417 1039 408zM1064 396l9 6L1017 699M1080 382l-7 20M996 699l3-3 6 3"/>
            <circle cx="841" cy="435" r="13"/><circle cx="1007" cy="380" r="14"/><circle cx="1062" cy="396" r="7"/>
            <ellipse cx="728" cy="296" rx="5" ry="16" transform="rotate(15 728 296)"/><path d="M736 282c-1 10-3 20-8 30"/>
          </g>
          <g class="lab">
            <text x="522" y="188">ASM_RIGHT</text><text x="681" y="237">ASM_FRONT</text><text x="735" y="287">DTM4</text><text x="547" y="473">ADTM1</text><text x="976" y="688">DTM3</text>
          </g>
          <text class="layer" x="304" y="604">Layer State:LAY_WORK(+)</text>
        </svg>
        <div class="floatbar">
          <i class="grip"></i>
          <button><svg><use href="#refit"/></svg></button>
          <button><svg><use href="#zoomin"/></svg></button>
          <button><svg><use href="#zoomout"/></svg></button>
          <button><svg><use href="#repaint"/></svg></button>
          <button class="more"><svg><use href="#cubes"/></svg></button>
          <button class="more"><svg><use href="#saved"/></svg></button>
          <button><svg><use href="#viewss"/></svg></button>
          <button class="more"><svg><use href="#datumf"/></svg></button>
          <button><svg><use href="#annof"/></svg></button>
          <button><svg><use href="#spin"/></svg></button>
          <i class="grip"></i>
        </div>
      </div>
      <nav class="sheets">
        <button class="nav"><svg viewBox="0 0 12 8"><path d="M6 0v8L0 4zM12 0v8L6 4z" fill="#555"/></svg></button>
        <button class="nav"><svg viewBox="0 0 12 8"><path d="M9 0v8L2 4z" fill="#aaa"/></svg></button>
        <button class="nav"><svg viewBox="0 0 12 8"><path d="M3 0v8l7-4z" fill="#aaa"/></svg></button>
        <button class="nav"><svg viewBox="0 0 12 8"><path d="M0 0v8l6-4zM6 0v8l6-4z" fill="#555"/></svg></button>
        <button class="add"><svg viewBox="0 0 8 8"><path d="M4 0v8M0 4h8" stroke="#888"/></svg></button>
        <button class="sheet">0_Def</button>
        <button class="sheet cur">0_Work</button>
        <button class="sheet">1_No_Solid</button>
        <button class="sheet">1_No_Style</button>
        <button class="sheet">2_Drw_3D</button>
        <button class="sheet">2_Drw_View</button>
        <button class="sheet">2_Drw_Xsec</button>
        <button class="sheet wide">2_Fea</button>
      </nav>
    </section>
  </main>

  <footer class="status">
    <button class="sb pressed"><svg><use href="#treeic"/></svg></button>
    <button class="sb"><svg><use href="#globe"/></svg></button>
    <p>Showing curve of type COMPOSITE CURVE in feature 9 (CURVE) of part PRT0001.</p>
    <span class="cell"></span>
    <span class="cell lights"><i></i><i class="lit"></i><i></i></span>
    <span class="cell flag"><svg><use href="#flag"/></svg></span>
    <span class="cell"><button class="sbig"><svg><use href="#binoc"/></svg></button></span>
    <span class="cell"><button class="sbig"><svg><use href="#geofilt"/></svg></button></span>
    <span class="count">1 selected</span>
    <div class="filter"><select aria-label="Selection filter"><option>Smart</option></select><svg class="caret"><use href="#caret"/></svg></div>
  </footer>
</div>
</body>
</html>
```
FILE: styles.css
```css
* { box-sizing: border-box; }
html, body { height: 100%; margin: 0; }
body { font: 11px/14px "Liberation Sans", Arial, sans-serif; color: #444; background: #fbfbfd; }
button { margin: 0; padding: 0; border: 0; background: none; font: inherit; color: inherit; white-space: nowrap; }
h1, h2, p, ul { margin: 0; padding: 0; }
svg { display: block; flex: none; overflow: visible; }
.paints { position: absolute; width: 0; height: 0; }
.sprite { display: none; }
.tiny { font: bold 7px "Liberation Sans", Arial, sans-serif; fill: #222; }
.fx { font: italic bold 8px "Liberation Sans", Arial, sans-serif; fill: #222; }
.infot { font: bold 11px "Liberation Serif", serif; fill: #fff; }
.qm { font: bold 13px "Liberation Sans", Arial, sans-serif; fill: #fff; }
.caret { width: 8px; height: 5px; display: inline-block; vertical-align: middle; }
.i16 { width: 16px; height: 16px; }
.i32 { width: 32px; height: 32px; }

.window { min-height: 100%; display: flex; flex-direction: column; border: 4px solid #9a989a; outline: 1px solid #555; outline-offset: -1px; background: #fbfbfd; }

.titlebar { display: flex; align-items: center; gap: 8px; height: 32px; padding: 0 8px 0 12px; }
.titlebar h1 { flex: 1; font-size: 12px; line-height: 16px; color: #333; white-space: nowrap; overflow: hidden; }
.ic, .ic svg { width: 16px; height: 16px; }
.ic.pad { padding: 2px; }
.ic.pad svg { width: 12px; height: 12px; }
.drop { width: 8px; display: flex; }
.titlebar .drop { margin-left: -2px; }
.vsep { width: 1px; height: 24px; margin: 0 -2px 0 -4px; background: #c8cacc; }
.cust { width: 12px; padding: 0 2px; }
.cust svg { width: 8px; height: 8px; }
.winbtns { display: flex; gap: 11px; }

.tabs { display: flex; align-items: flex-end; height: 26px; margin: 0 4px; font-weight: bold; font-size: 12px; position: relative; z-index: 1; color: #757779; }
.file { height: 21px; width: 44px; background: #e9ebed; border: 1px solid #c3c5c7; border-bottom: 0; margin-right: 8px; }
.tab { height: 21px; padding: 0 11px; background: #eeeff1; border-top: 1px solid #c3c5c7; border-right: 1px solid #d3d5d7; }
.tab.active { height: 26px; padding: 4px 10px 0; margin-bottom: -1px; background: #fbfbfd; border: 1px solid #c3c5c7; border-bottom: 0; color: #333; }
.help { margin-left: auto; display: flex; gap: 7px; align-items: center; height: 26px; padding: 0 4px 2px 0; }

.ribbon { display: flex; margin: 0 5px 0 4px; border: 1px solid #c3c5c7; }
.group { flex: none; display: flex; flex-direction: column; border-right: 1px solid #d0d2d4; }
.body { display: grid; height: 79px; padding-top: 1px; }
.foot { height: 24px; width: 100%; padding-bottom: 3px; background: #eeeff1; border-top: 1px solid #c8cacc; }
.big { display: flex; flex-direction: column; align-items: center; padding-top: 5px; }
.big .i32 { margin-bottom: 6px; }
.big > .caret { margin-top: 4px; }
.col { display: flex; flex-direction: column; align-items: flex-start; }
.col.mid { align-items: center; }
.col.ruled { border-right: 1px solid #e2e3e5; margin-bottom: 8px; }
.sm { display: flex; align-items: center; gap: 3px; height: 25px; }
.sm .caret { margin-left: 3px; }
.off { color: #aaa; }
.deq { font-size: 14px; font-weight: bold; }
.g-ops { width: 109px; } .g-ops .body { grid-template-columns: 71px 1fr; }
.g-data { width: 64px; }
.g-comp { width: 166px; } .g-comp .body { grid-template-columns: 64px 26px 1fr; }
.g-datum { width: 207px; } .g-datum .body { grid-template-columns: 47px 1fr 50px; }
.g-cut { width: 90px; } .g-cut .body { padding-left: 15px; }
.g-mod { width: 66px; }
.g-disp { width: 318px; } .g-disp .body { grid-template-columns: 60px 36px 78px 1fr 52px; }
.g-intent { width: 188px; } .g-intent .body { grid-template-columns: 68px 46px 50px 1fr; }
.g-inv { width: 117px; } .g-inv .body { grid-template-columns: 56px 54px; }
.g-rest { flex: 1; border-right: 0; }

.work { flex: 1; display: flex; min-height: 0; }
.side { width: 288px; margin: 12px 1px 11px 4px; display: flex; flex-direction: column; }
.sidetabs { display: flex; height: 30px; margin-bottom: -1px; position: relative; z-index: 1; }
.sidetabs button { width: 30px; display: flex; align-items: center; justify-content: center; background: #eeeff1; border: 1px solid #c3c5c7; border-left-width: 0; }
.sidetabs .on { background: #fbfbfd; border-left-width: 1px; border-bottom: 0; }
.sidetabs svg { width: 20px; height: 20px; }
.sidetabs .tr { width: 14px; }
.panel { flex: 1; display: flex; flex-direction: column; border: 1px solid #c3c5c7; border-right: 3px solid #c3c5c7; border-bottom: 2px solid #c3c5c7; }
.phead { display: flex; align-items: center; height: 28px; gap: 8px; padding: 0 4px 0 20px; }
.phead h2 { flex: 1; font-size: 12px; font-weight: bold; color: #555; }
.pi, .pi svg { width: 20px; height: 20px; }
.pi.last { margin-left: 4px; }
.pfind { display: flex; align-items: center; gap: 8px; height: 29px; padding: 0 5px 5px 4px; border-bottom: 1px solid #c3c5c7; }
.box { flex: 1; display: flex; align-items: center; height: 22px; border: 1px solid #c3c5c7; background: #fff; padding-right: 4px; }
.box input { flex: 1; min-width: 0; height: 18px; border: 0; background: none; outline: 0; font: inherit; }
.box svg { width: 10px; height: 10px; }
.bi, .bi svg { width: 17px; height: 16px; }
.plus svg { width: 12px; height: 16px; margin: 0 auto; }
.treewrap { flex: 1; display: flex; padding: 6px 1px 1px 0; }
.tree { flex: 1; list-style: none; }
.tree li { display: flex; align-items: center; gap: 3px; height: 20px; padding-left: 15px; white-space: nowrap; }
.tree .root { padding-left: 11px; gap: 2px; }
.tree .deep { padding-left: 50px; gap: 4px; }
.tree .tw { width: 12px; height: 10px; }
.tree .tw svg { width: 9px; height: 10px; }
.tree span { display: flex; align-items: center; height: 20px; }
.sel span { background: #ade1fb; padding-right: 1px; color: #333; }
.m1 { width: 6px; height: 10px; margin-right: 1px; }
.m2 { width: 8px; height: 10px; margin-right: 1px; }
.scroll { width: 18px; display: flex; flex-direction: column; border: 1px solid #c3c5c7; background: #e9eaec; }
.scroll button { height: 16px; background: #f4f4f6; display: flex; align-items: center; justify-content: center; }
.up { transform: rotate(180deg); }
.thumb { flex: 1; display: flex; align-items: center; justify-content: center; margin: 0 1px; border: 1px solid #c8cacc; border-width: 1px 0; background: linear-gradient(90deg, #fff, #e4e5e7); }
.thumb i { width: 7px; height: 11px; background: repeating-linear-gradient(#aaa 0 1px, #eee 1px 2px); }
.track { height: 19px; border-bottom: 1px solid #c8cacc; }

.view { flex: 1; min-width: 0; display: flex; flex-direction: column; margin-right: 5px; }
.canvas { flex: 1; position: relative; min-height: 0; border-bottom: 1px solid #d8dadc; overflow: hidden; }
.scene { width: 100%; height: 100%; position: absolute; inset: 0; overflow: hidden; }
.scene path, .scene circle, .scene ellipse { fill: none; stroke-width: 1; shape-rendering: crispEdges; }
.scene .face { fill: #5083b3; }
.scene .strip { fill: #4279b0; }
.scene .darkface { fill: #3a76ac; }
.edge { stroke: #10202e; }
.gray { stroke: #7d7d85; }
.brown { stroke: #8a6038; }
.cyan { stroke: #1a92be; }
.green { stroke: #35bd57; }
.lab { font-size: 11px; fill: #8a6038; }
.layer { font-size: 9px; fill: #666; }
.floatbar { position: absolute; top: 6px; left: 50%; transform: translateX(-50%); display: flex; height: 28px; border: 1px solid #c8cacc; background: #fbfbfd; }
.floatbar button { position: relative; width: 27px; display: flex; align-items: center; justify-content: center; border-right: 1px solid #d0d2d4; }
.floatbar svg { width: 16px; height: 16px; }
.grip { width: 5px; background: #e9eaec; border-right: 1px solid #d0d2d4; }
.more::after { content: ""; position: absolute; right: 2px; bottom: 3px; border: 2px solid #555; border-top-color: transparent; border-left-color: transparent; }
.sheets { display: flex; align-items: stretch; height: 26px; padding: 3px 0 4px 2px; border-right: 1px solid #d0d2d4; }
.nav { width: 17px; display: flex; align-items: center; justify-content: center; }
.nav svg { width: 10px; height: 7px; }
.add { width: 20px; margin-left: 5px; display: flex; align-items: center; justify-content: center; background: #eeeff1; border: 1px solid #c8cacc; }
.add svg { width: 8px; height: 8px; }
.sheet { padding: 0 9px; background: #eeeff1; border: 1px solid #d0d2d4; border-left: 0; border-top-color: #d8dadc; }
.cur { padding: 0 5px; background: #fbfbfd; font-weight: bold; }
.wide { padding: 0 17px; }

.status { display: flex; align-items: center; height: 38px; padding: 0 18px 0 6px; background: #eeeff1; border-top: 2px solid #9a989a; }
.sb { width: 22px; height: 22px; margin-right: 4px; margin-top: 6px; display: flex; align-items: center; justify-content: center; background: #f6f6f8; border: 1px solid #c8cacc; }
.pressed { background: #e6e7e9; border-top-color: #888; border-left-color: #999; }
.sb svg { width: 18px; height: 18px; }
.status p { flex: 1; margin-left: 5px; padding-left: 7px; border-left: 1px solid #d8dadc; height: 22px; line-height: 16px; }
.status p::before { content: ""; display: inline-block; width: 5px; height: 5px; border-radius: 50%; background: #1d5f80; vertical-align: 2px; margin-right: 5px; }
.cell { display: flex; align-items: center; justify-content: center; height: 30px; min-width: 30px; padding: 0 3px; border-left: 1px solid #d0d2d4; gap: 1px; }
.lights i { width: 6px; height: 6px; border-radius: 50%; background: #c8c8cc; }
.lights .lit { width: 11px; height: 11px; background: #fdfd00; }
.lights { min-width: 36px; }
.flag { min-width: 40px; justify-content: flex-start; }
.flag svg { width: 14px; height: 18px; }
.sbig { width: 40px; height: 28px; display: flex; align-items: center; justify-content: center; background: linear-gradient(#fafafb, #e6e7e9); border: 1px solid #b9bbbd; border-radius: 3px; }
.sbig svg { width: 18px; height: 18px; }
.count { width: 93px; }
.filter { position: relative; width: 152px; height: 21px; }
.filter select { appearance: none; width: 100%; height: 100%; padding: 0 7px; border: 1px solid #c3c5c7; border-radius: 0; background: linear-gradient(90deg, transparent 138px, #c3c5c7 138px 139px, #e9eaec 139px), #fbfbfd; font: inherit; color: inherit; }
.filter .caret { position: absolute; right: 3px; top: 8px; pointer-events: none; }
```
